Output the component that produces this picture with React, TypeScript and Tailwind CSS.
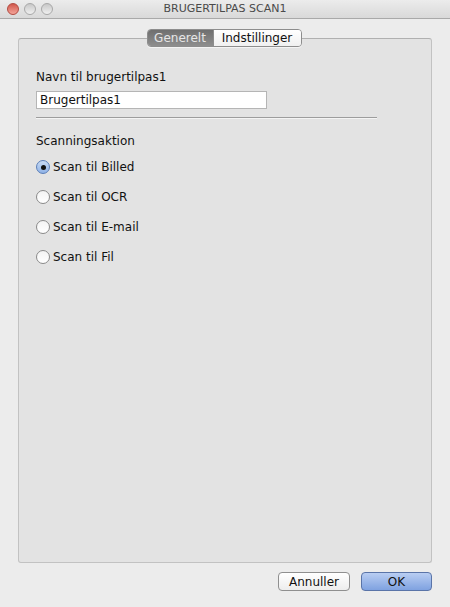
import React from 'react'

const font = { fontFamily: '"DejaVu Sans", "Liberation Sans", sans-serif' }

function Radio({ label, checked }: { label: string; checked?: boolean }) {
    return (
        <div className="flex items-center h-[30px]">
            {checked ? (
                <span className="w-[14px] h-[14px] rounded-full border border-[#5b7fb8] bg-gradient-to-b from-[#c9dbf4] to-[#8fb2e6] flex items-center justify-center">
                    <span className="w-[5px] h-[5px] rounded-full bg-[#111]" />
                </span>
            ) : (
                <span className="w-[14px] h-[14px] rounded-full border border-[#8a8a8a] bg-gradient-to-b from-[#f4f4f4] to-[#ffffff]" />
            )}
            <span className="ml-[3px] text-[12px] text-[#111]">{label}</span>
        </div>
    )
}

export default function App() {
    return (
        <div className="w-[450px] h-[607px] bg-[#ececec] flex flex-col overflow-hidden" style={font}>
            {/* title bar */}
            <div className="h-[19px] relative flex items-center justify-center bg-gradient-to-b from-[#ececec] to-[#d9d9d9] border-b border-[#a9a9a9]">
                <div className="absolute left-[7px] top-[3px] flex gap-[5px]">
                    <span className="w-[12px] h-[12px] rounded-full bg-gradient-to-b from-[#d0574c] to-[#f3a49a] border border-[#b24a40]" />
                    <span className="w-[12px] h-[12px] rounded-full bg-gradient-to-b from-[#c8c8c8] to-[#f0f0f0] border border-[#a8a8a8]" />
                    <span className="w-[12px] h-[12px] rounded-full bg-gradient-to-b from-[#c8c8c8] to-[#f0f0f0] border border-[#a8a8a8]" />
                </div>
                <span className="text-[11px] text-[#4a4a4a]">BRUGERTILPAS SCAN1</span>
            </div>

            <div className="flex-1 flex flex-col px-[18px] pt-[10px]">
                {/* tabs */}
                <div className="relative z-10 self-center flex h-[18px] ml-[-2px] rounded-[4px] border border-[#8d8d8d] overflow-hidden shadow-[0_1px_0_rgba(255,255,255,0.6)]">
                    <div className="w-[65px] flex items-center justify-center bg-gradient-to-b from-[#6f6f6f] to-[#8e8e8e] text-[12px] text-[#e6e6e6]">
                        Generelt
                    </div>
                    <div className="w-[88px] flex items-center justify-center border-l border-[#8d8d8d] bg-gradient-to-b from-[#ffffff] to-[#f0f0f0] text-[12px] text-[#111]">
                        Indstillinger
                    </div>
                </div>

                {/* group box */}
                <div className="mt-[-9px] h-[525px] rounded-[3px] border border-[#c2c2c2] border-t-[#b0b0b0] bg-[#e3e3e3] px-[17px] pt-[31px]">
                    <div className="text-[12px] text-[#111] leading-[14px]">Navn til brugertilpas1</div>
                    <div className="mt-[7px] w-[231px] h-[18px] border border-[#b5b5b5] bg-white flex items-center px-[3px] text-[12px] text-[#111]">
                        Brugertilpas1
                    </div>
                    <div className="mt-[8px] w-[341px] h-[2px] border-t border-[#9d9d9d] border-b border-b-[#f4f4f4]" />
                    <div className="mt-[15px] text-[12px] text-[#111] leading-[14px]">Scanningsaktion</div>
                    <div className="mt-[4px] flex flex-col">
                        <Radio label="Scan til Billed" checked />
                        <Radio label="Scan til OCR" />
                        <Radio label="Scan til E-mail" />
                        <Radio label="Scan til Fil" />
                    </div>
                </div>

                {/* buttons */}
                <div className="mt-[9px] flex justify-end gap-[11px]">
                    <button className="w-[72px] h-[19px] rounded-[4px] border border-[#8f8f8f] bg-gradient-to-b from-[#ffffff] to-[#ededed] text-[12px] text-[#111] leading-none">
                        Annuller
                    </button>
                    <button className="w-[71px] h-[19px] rounded-[4px] border border-[#5a74a8] bg-gradient-to-b from-[#b9cdf2] to-[#7fa2e0] text-[12px] text-[#111] leading-none">
                        OK
                    </button>
                </div>
            </div>
        </div>
    )
}
